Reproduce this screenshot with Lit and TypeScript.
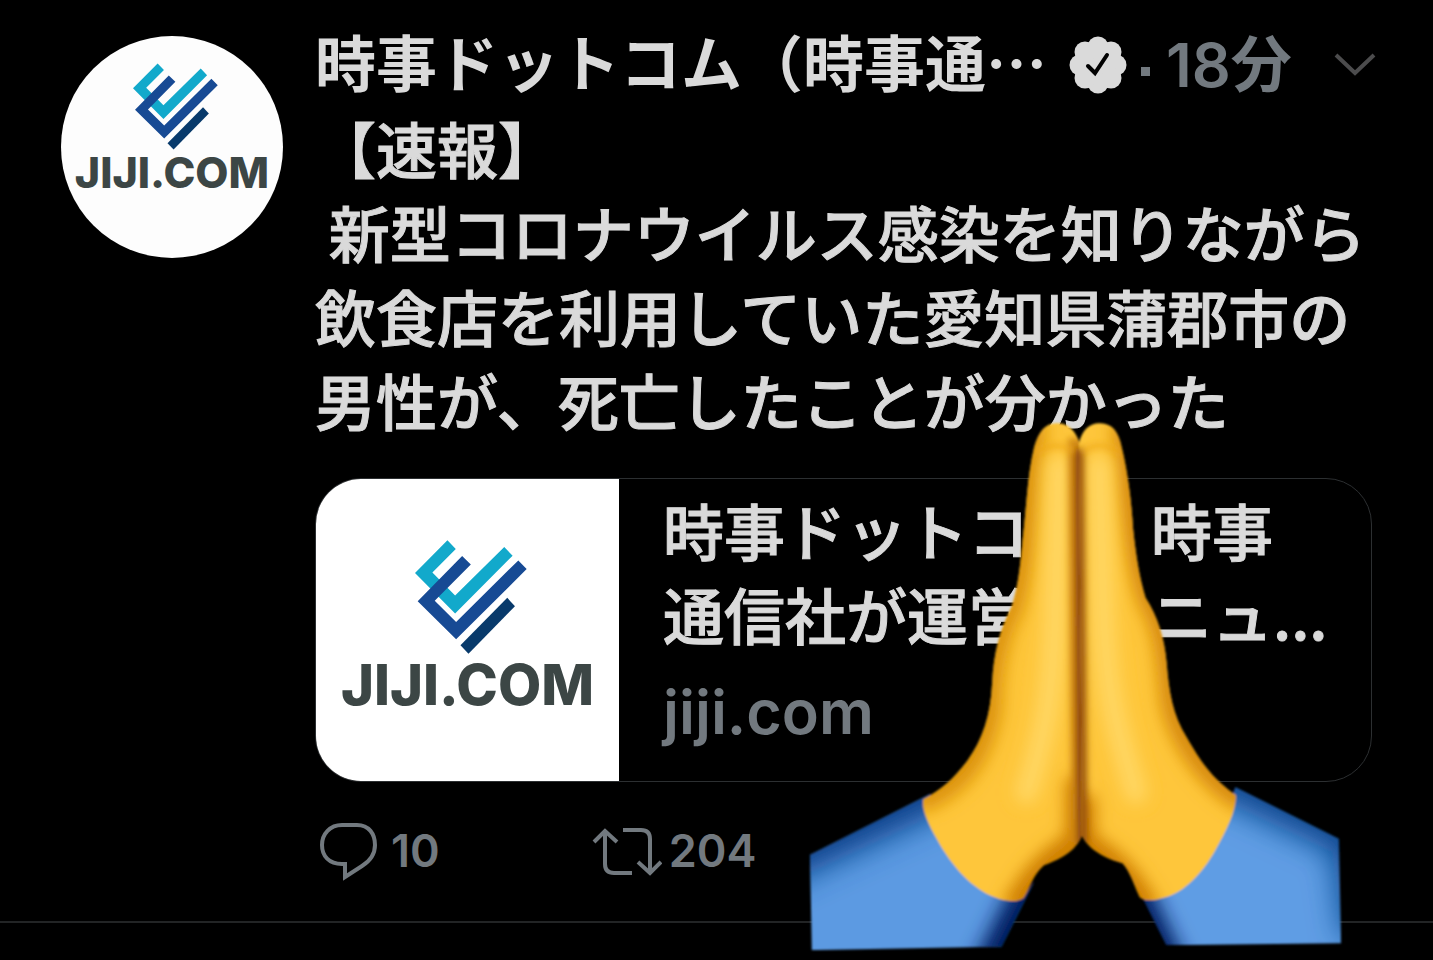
import { LitElement, html, svg, css } from "lit";
import { customElement, property } from "lit/decorators.js";

@customElement("jiji-logo")
class JijiLogo extends LitElement {
  static styles = css`
    :host {
      display: flex;
      flex-direction: column;
      align-items: center;
      gap: 7px;
      color: #3c4645;
      font: 800 56px/48px Inter, "Liberation Sans", sans-serif;
    }
    .mark { display: block; width: 112px; height: 114px; margin-left: 6px; }
    :host([small]) { font-size: 43px; line-height: 36px; gap: 4px; }
    :host([small]) .mark { width: 85px; height: 87px; }
  `;
  render() {
    return html`
      <svg class="mark" viewBox="320 211 335 341" aria-hidden="true">
        <path fill="#12a9cb" d="M417 212L442 238L372 308L440 377L587 232L612 258L440 431L320 310Z" />
        <path fill="#fff" d="M380 393L440 448L632 262L640 272L440 470L368 398Z" />
        <path fill="#174a94" d="M461 259L487 284L379 393L443 456L629 272L654 298L443 508L328 394Z" />
        <path fill="#083a6b" d="M596 384L619 409L480 551L456 526Z" />
      </svg>
      <span>JIJI.COM</span>
    `;
  }
}

@customElement("folded-hands")
class FoldedHands extends LitElement {
  static styles = css`
    :host { display: block; pointer-events: none; }
    .art { display: block; width: 570px; height: 550px; }
  `;
  render() {
    const left =
      "M733 38C702 38 684 62 672 105C652 190 650 290 640 370C633 450 628 500 610 560C578 625 560 690 556 780C552 870 530 940 488 1000C448 1055 415 1083 367 1110C362 1140 380 1180 405 1225C445 1300 500 1365 565 1390C595 1402 628 1404 643 1390C660 1362 668 1325 698 1298C735 1282 785 1262 803 1212L797 95C784 55 762 36 733 38Z";
    const right =
      "M850 38C885 36 904 62 912 105C930 180 940 270 944 340C952 420 962 480 978 535C1012 590 1030 650 1036 720C1042 800 1052 870 1092 935C1128 1000 1160 1050 1226 1098C1228 1140 1205 1190 1170 1255C1135 1320 1085 1375 1030 1390C1000 1400 975 1400 962 1388C945 1350 935 1315 915 1292C870 1278 822 1255 803 1212L795 95C804 55 825 38 850 38Z";
    return svg`
      <svg class="art" viewBox="0 0 1568 1568" preserveAspectRatio="none" role="img" aria-label="folded hands">
        <defs>
          <clipPath id="lh"><path d=${left} /></clipPath>
          <clipPath id="rh"><path d=${right} /></clipPath>
          <clipPath id="ls"><path d="M55 1268L385 1095L500 1330L640 1392L672 1345L582 1530L60 1540Z" /></clipPath>
          <clipPath id="rs"><path d="M1225 1075L1510 1222L1516 1520L1035 1526L930 1310L970 1390L1150 1280Z" /></clipPath>
          <filter id="b1" filterUnits="userSpaceOnUse" x="0" y="-100" width="1568" height="1768"><feGaussianBlur stdDeviation="22" /></filter>
          <filter id="b2" filterUnits="userSpaceOnUse" x="0" y="-100" width="1568" height="1768"><feGaussianBlur stdDeviation="9" /></filter>
          <filter id="b3" filterUnits="userSpaceOnUse" x="-200" y="800" width="1968" height="1000"><feGaussianBlur stdDeviation="42" /></filter>
          <filter id="b4" filterUnits="userSpaceOnUse" x="-200" y="800" width="1968" height="1000"><feGaussianBlur stdDeviation="26" /></filter>
          <filter id="soft" filterUnits="userSpaceOnUse" x="0" y="0" width="1568" height="1568"><feGaussianBlur stdDeviation="3" /></filter>
        </defs>
        <g filter="url(#soft)">
          <g clip-path="url(#ls)">
            <rect x="40" y="1040" width="700" height="520" fill="#5b9ae2" />
            <path d="M-60 1290L440 1050" stroke="#0a438c" stroke-width="150" filter="url(#b3)" />
            <path d="M720 1270L560 1600" stroke="#001f60" stroke-width="120" filter="url(#b4)" />
          </g>
          <g clip-path="url(#rs)">
            <rect x="900" y="1040" width="640" height="520" fill="#5f9de4" />
            <path d="M1150 1010L1560 1210L1600 1500" fill="none" stroke="#0a478f" stroke-width="150" filter="url(#b3)" />
            <path d="M890 1270L1040 1600" stroke="#001f60" stroke-width="110" filter="url(#b4)" />
          </g>
          <g clip-path="url(#lh)">
            <rect x="340" y="20" width="480" height="1400" fill="#fec63a" />
            <path d="M665 30C635 200 645 400 600 560C555 640 540 760 540 850C515 1000 440 1080 340 1110" fill="none" stroke="#dd940a" stroke-width="84" filter="url(#b1)" />
            <path d="M620 1430C655 1370 690 1300 800 1235L802 1050" fill="none" stroke="#cf7f06" stroke-width="86" filter="url(#b1)" />
            <path d="M738 160L728 600C720 850 690 960 650 1090" fill="none" stroke="#ffd661" stroke-width="66" stroke-linecap="round" filter="url(#b1)" />
            <path d="M794 80L804 1230" stroke="#d18a14" stroke-width="60" filter="url(#b2)" />
            <path d="M800 110L806 1240" stroke="#86400a" stroke-width="30" filter="url(#b2)" />
            <path d="M675 125C710 92 755 100 780 118" fill="none" stroke="#efa91b" stroke-width="12" filter="url(#b2)" />
          </g>
          <g clip-path="url(#rh)">
            <rect x="780" y="20" width="480" height="1400" fill="#fec63a" />
            <path d="M925 30C950 200 950 400 998 540C1045 620 1050 720 1060 830C1085 950 1170 1060 1260 1110" fill="none" stroke="#d88c08" stroke-width="84" filter="url(#b1)" />
            <path d="M985 1430C945 1370 920 1300 803 1235L800 1100" fill="none" stroke="#d07f06" stroke-width="76" filter="url(#b1)" />
            <path d="M850 160L862 600C872 850 915 960 950 1090" fill="none" stroke="#ffd661" stroke-width="66" stroke-linecap="round" filter="url(#b1)" />
            <path d="M793 110L803 1240" stroke="#9c560a" stroke-width="32" filter="url(#b2)" />
            <path d="M805 120C835 92 880 98 908 125" fill="none" stroke="#efa91b" stroke-width="12" filter="url(#b2)" />
          </g>
        </g>
      </svg>`;
  }
}

@customElement("app-root")
class AppRoot extends LitElement {
  static styles = css`
    :host {
      display: block;
      position: relative;
      min-height: 100vh;
      overflow: hidden;
      background: #000;
      color: #dadada;
      font: 500 61px/84px "Noto Sans CJK JP", sans-serif;
    }
    * { box-sizing: border-box; }
    .post {
      display: flex;
      gap: 32px;
      padding: 24px 61px 40px;
      border-bottom: 2px solid #222425;
    }
    .avatar {
      flex: none;
      width: 222px;
      height: 222px;
      margin-top: 12px;
      padding-top: 27px;
      border-radius: 50%;
      background: #fdfdfd;
    }
    .content { flex: 1; min-width: 0; }
    .head { display: flex; align-items: center; height: 82px; white-space: nowrap; }
    .name { margin: 0 0 8px; font-size: 61px; font-weight: 700; }
    .badge { flex: none; width: 58px; height: 58px; margin-left: 22px; }
    .time { color: #72797f; font-family: Inter, "Noto Sans CJK JP", sans-serif; font-weight: 600; }
    .dot { flex: none; width: 9px; height: 9px; margin: 12px 16px 0 14px; background: #72797f; }
    .more { display: flex; margin-left: auto; }
    button {
      display: flex;
      align-items: center;
      padding: 0;
      border: 0;
      background: none;
      color: #72797f;
      font: 600 45px/60px Inter, sans-serif;
    }
    .chevron { width: 40px; height: 30px; overflow: visible; }
    .text { margin: 0; white-space: pre-wrap; line-break: anywhere; -webkit-text-stroke: 1px; }
    .card {
      display: flex;
      margin-top: 36px;
      border: 1px solid #2c2f31;
      border-radius: 46px;
      overflow: hidden;
      color: inherit;
      text-decoration: none;
    }
    .thumb { flex: none; width: 303px; height: 302px; padding-top: 61px; background: #fff; }
    .info { flex: 1; min-width: 0; padding: 9px 20px 0 44px; }
    .line { display: block; white-space: nowrap; -webkit-text-stroke: 1px; }
    .domain { display: block; padding-top: 14px; color: #72797f; font-family: Inter, sans-serif; font-weight: 600; }
    .actions { display: flex; gap: 150px; margin-top: 39px; }
    .reply { width: 66px; height: 60px; margin-right: 10px; }
    .repost { width: 72px; height: 60px; margin-right: 7px; }
    .hands { position: absolute; top: 410px; right: 73px; }
  `;

  @property() name = "時事ドットコム（時事通…";
  @property() replies = 10;
  @property() reposts = 204;

  render() {
    return html`
      <article class="post">
        <div class="avatar"><jiji-logo small></jiji-logo></div>
        <div class="content">
          <header class="head">
            <h1 class="name">${this.name}</h1>
            <svg class="badge" viewBox="0 0 58 58" role="img" aria-label="認証済み">
              <g fill="#dadada">
                <circle cx="29" cy="29" r="22" />
                <circle cx="29" cy="11" r="10.5" /><circle cx="42" cy="16" r="10.5" />
                <circle cx="47" cy="29" r="10.5" /><circle cx="42" cy="42" r="10.5" />
                <circle cx="29" cy="47" r="10.5" /><circle cx="16" cy="42" r="10.5" />
                <circle cx="11" cy="29" r="10.5" /><circle cx="16" cy="16" r="10.5" />
              </g>
              <path d="M19 30L26 37L38 19" fill="none" stroke="#000" stroke-width="4" stroke-linecap="round" />
            </svg>
            <span class="dot"></span>
            <time class="time">18分</time>
            <button class="more" aria-label="その他">
              <svg class="chevron" viewBox="0 0 40 30"><path d="M4 5L23 23L42 5" fill="none" stroke="#4c4c4d" stroke-width="4" /></svg>
            </button>
          </header>
          <p class="text">【速報】
 新型コロナウイルス感染を知りながら
飲食店を利用していた愛知県蒲郡市の
男性が、死亡したことが分かった</p>
          <a class="card" href="#">
            <div class="thumb"><jiji-logo></jiji-logo></div>
            <div class="info">
              <span class="line">時事ドットコム：時事</span>
              <span class="line">通信社が運営するニュ...</span>
              <span class="domain">jiji.com</span>
            </div>
          </a>
          <div class="actions">
            <button aria-label="返信 ${this.replies}">
              <svg class="reply" viewBox="0 0 66 60">
                <path d="M27 4H42C54 4 60 13 60 24C60 34 55 40 47 45L30 56V43H27C14 43 7 35 7 24C7 13 15 4 27 4Z" fill="none" stroke="#72797f" stroke-width="4" />
              </svg>
              <span>${this.replies}</span>
            </button>
            <button aria-label="リポスト ${this.reposts}">
              <svg class="repost" viewBox="0 0 72 60">
                <path d="M4 21L15 10L27 21M15 11V43Q15 52 24 52H42M33 9H51Q60 9 60 18V51M48 41L60 52L71 41" fill="none" stroke="#72797f" stroke-width="4" />
              </svg>
              <span>${this.reposts}</span>
            </button>
          </div>
        </div>
      </article>
      <folded-hands class="hands"></folded-hands>
    `;
  }
}
